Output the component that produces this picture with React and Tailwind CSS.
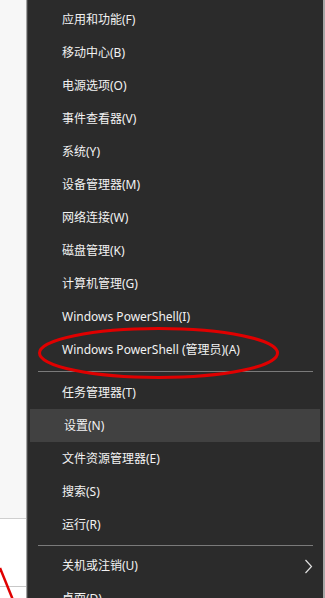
import React from "react";

const groupA = [
  "应用和功能(F)",
  "移动中心(B)",
  "电源选项(O)",
  "事件查看器(V)",
  "系统(Y)",
  "设备管理器(M)",
  "网络连接(W)",
  "磁盘管理(K)",
  "计算机管理(G)",
  "Windows PowerShell(I)",
  "Windows PowerShell (管理员)(A)",
];
const groupB = ["任务管理器(T)", "设置(N)", "文件资源管理器(E)", "搜索(S)", "运行(R)"];

function Row({ label, active, chevron }) {
  return (
    <div
      className={
        "relative flex h-[33px] shrink-0 items-center pl-[34px] " +
        (active ? "bg-[#414141] ml-[2px] mr-[3px] pl-[32px]" : "")
      }
    >
      <span className="text-[12px] leading-none text-[#f2f2f2] whitespace-nowrap">{label}</span>
      {chevron && (
        <svg className="absolute right-[10px] top-[10px]" width="9" height="15" viewBox="0 0 9 15">
          <polyline points="1.5,1 7.5,7.5 1.5,14" fill="none" stroke="#e0e0e0" strokeWidth="1.2" />
        </svg>
      )}
    </div>
  );
}

export default function App() {
  return (
    <div
      className="relative flex h-[598px] w-[325px] overflow-hidden bg-white"
      style={{ fontFamily: '"Noto Sans", "Noto Sans CJK SC", sans-serif' }}
    >
      <div className="flex w-[26px] shrink-0 flex-col">
        <div className="h-[519px] border-b border-[#cfcfcf] bg-[#f7f7f7]" />
        <div className="h-[68px] border-b border-[#c8c8c8] bg-white" />
        <div className="flex-1 bg-white" />
      </div>
      <div className="w-px shrink-0 bg-[#a3a3a3]" />
      <div className="w-px shrink-0 bg-[#4a4a4a]" />
      <div className="flex w-[295px] shrink-0 flex-col bg-[#2b2b2b] pt-[3px]">
        {groupA.map((l) => (
          <Row key={l} label={l} />
        ))}
        <div className="flex h-[10px] shrink-0 items-center pl-[10px] pr-[10px]">
          <div className="h-px w-full bg-[#7a7a7a]" />
        </div>
        {groupB.map((l) => (
          <Row key={l} label={l} active={l === "设置(N)"} />
        ))}
        <div className="flex h-[8px] shrink-0 items-center pl-[10px] pr-[10px]">
          <div className="h-px w-full bg-[#7a7a7a]" />
        </div>
        <Row label="关机或注销(U)" chevron />
        <Row label="桌面(D)" />
      </div>
      <div className="w-[2px] shrink-0 bg-[#a6a6a6]" />

      <svg className="pointer-events-none absolute left-0 top-0" width="325" height="598" viewBox="0 0 325 598">
        <ellipse cx="158.5" cy="353" rx="119" ry="24.5" fill="none" stroke="#e00000" strokeWidth="3" />
        <line x1="0" y1="568" x2="13" y2="600" stroke="#e00000" strokeWidth="2.5" />
      </svg>
    </div>
  );
}
